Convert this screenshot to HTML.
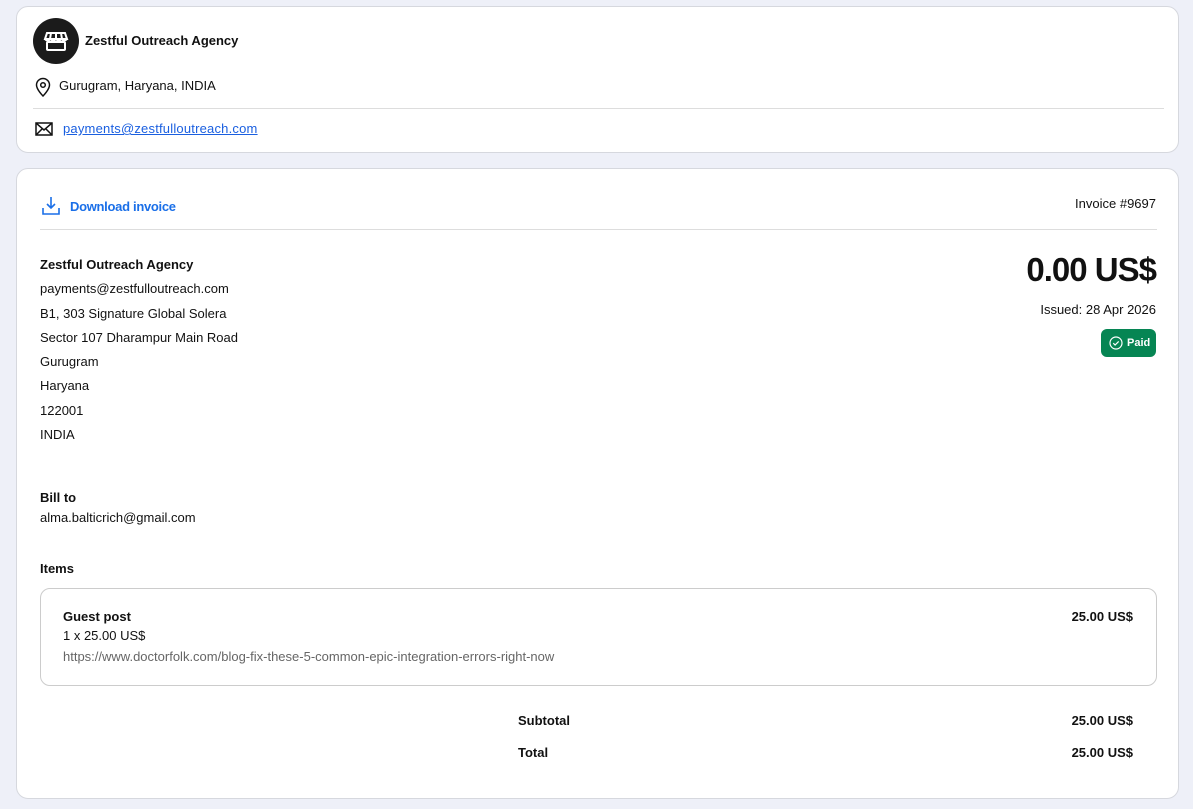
<!DOCTYPE html>
<html><head><meta charset="utf-8"><style>
*{box-sizing:border-box;margin:0;padding:0}
body{width:1193px;height:809px;background:#eef0f8;font-family:"Liberation Sans",sans-serif;font-size:13px;color:#111;position:relative;overflow:hidden}
.card{position:absolute;left:16px;right:14px;background:#fff;border:1px solid #d6d8de;border-radius:12px}
.a{position:absolute}
b{font-weight:bold}
</style></head><body>
<div class="card" style="top:6px;height:147px">
  <div class="a" style="left:16px;top:11px;width:46px;height:46px;border-radius:50%;background:#1b1b1b">
    <svg width="46" height="46" viewBox="0 0 46 46" fill="none" stroke="#fff" stroke-width="2"><path d="M14 15h18l2 6H12z"/><path d="M12 21q2.5 3 5.5 0q2.5 3 5.5 0q2.5 3 5.5 0q2.5 3 5.5 0"/><rect x="14" y="24" width="18" height="8" rx="1"/><path d="M18 15l-1 6M23 15v6M28 15l1 6"/></svg>
  </div>
  <div class="a" style="left:68px;top:26px;font-weight:bold;font-size:13px">Zestful Outreach Agency</div>
  <svg class="a" style="left:18px;top:70px" width="16" height="20" viewBox="0 0 16 20" fill="none" stroke="#111" stroke-width="1.5"><path d="M8 19s-6.5-6.5-6.5-11a6.5 6.5 0 0113 0C14.5 12.5 8 19 8 19z"/><circle cx="8" cy="8" r="2.3"/></svg>
  <div class="a" style="left:42px;top:71px">Gurugram, Haryana, INDIA</div>
  <div class="a" style="left:16px;right:14px;top:101px;border-top:1px solid #ddd"></div>
  <svg class="a" style="left:18px;top:115px" width="18" height="14" viewBox="0 0 18 14" fill="none" stroke="#111" stroke-width="1.5"><rect x="1" y="1" width="16" height="12"/><path d="M1 1l8 7 8-7M1 13l6-6M17 13l-6-6"/></svg>
  <div class="a" style="left:46px;top:114px;color:#1a5fe0;text-decoration:underline;letter-spacing:0.2px">payments@zestfulloutreach.com</div>
</div>
<div class="card" style="top:168px;height:631px">
  <svg class="a" style="left:24px;top:27px" width="20" height="20" viewBox="0 0 20 20" fill="none" stroke="#1a6fe8" stroke-width="1.6"><path d="M10 1v11M6 8l4 4 4-4M2 12v6h16v-6"/></svg>
  <div class="a" style="left:53px;top:30px;color:#1a6fe8;font-weight:bold;letter-spacing:-0.3px">Download invoice</div>
  <div class="a" style="right:22px;top:27px">Invoice #9697</div>
  <div class="a" style="left:23px;right:21px;top:60px;border-top:1px solid #ddd"></div>
  <div class="a" style="left:23px;top:84px;line-height:24.3px">
    <b>Zestful Outreach Agency</b><br>payments@zestfulloutreach.com<br>B1, 303 Signature Global Solera<br>Sector 107 Dharampur Main Road<br>Gurugram<br>Haryana<br>122001<br>INDIA
  </div>
  <div class="a" style="right:22px;top:82px;font-size:33px;font-weight:bold;letter-spacing:-1px">0.00 US$</div>
  <div class="a" style="right:22px;top:133px">Issued: 28 Apr 2026</div>
  <div class="a" style="right:22px;top:160px;width:55px;height:28px;background:#068553;border-radius:6px;color:#fff;font-size:11px;font-weight:bold;padding:8px 0 0 26px">Paid
    <svg class="a" style="left:8px;top:7px" width="14" height="14" viewBox="0 0 14 14" fill="none" stroke="#fff" stroke-width="1.2"><circle cx="7" cy="7" r="6"/><path d="M4.3 7.2l1.8 1.8 3.6-3.6"/></svg>
  </div>
  <div class="a" style="left:23px;top:321px"><b>Bill to</b></div>
  <div class="a" style="left:23px;top:341px">alma.balticrich@gmail.com</div>
  <div class="a" style="left:23px;top:392px"><b>Items</b></div>
  <div class="a" style="left:23px;right:21px;top:419px;height:98px;border:1px solid #ccc;border-radius:10px">
    <div class="a" style="left:22px;top:20px"><b>Guest post</b></div>
    <div class="a" style="left:22px;top:39px">1 x 25.00 US$</div>
    <div class="a" style="left:22px;top:60px;color:#666">https://www.doctorfolk.com/blog-fix-these-5-common-epic-integration-errors-right-now</div>
    <div class="a" style="right:23px;top:20px"><b>25.00 US$</b></div>
  </div>
  <div class="a" style="left:501px;top:544px"><b>Subtotal</b></div>
  <div class="a" style="right:45px;top:544px"><b>25.00 US$</b></div>
  <div class="a" style="left:501px;top:576px"><b>Total</b></div>
  <div class="a" style="right:45px;top:576px"><b>25.00 US$</b></div>
</div>
</body></html>
